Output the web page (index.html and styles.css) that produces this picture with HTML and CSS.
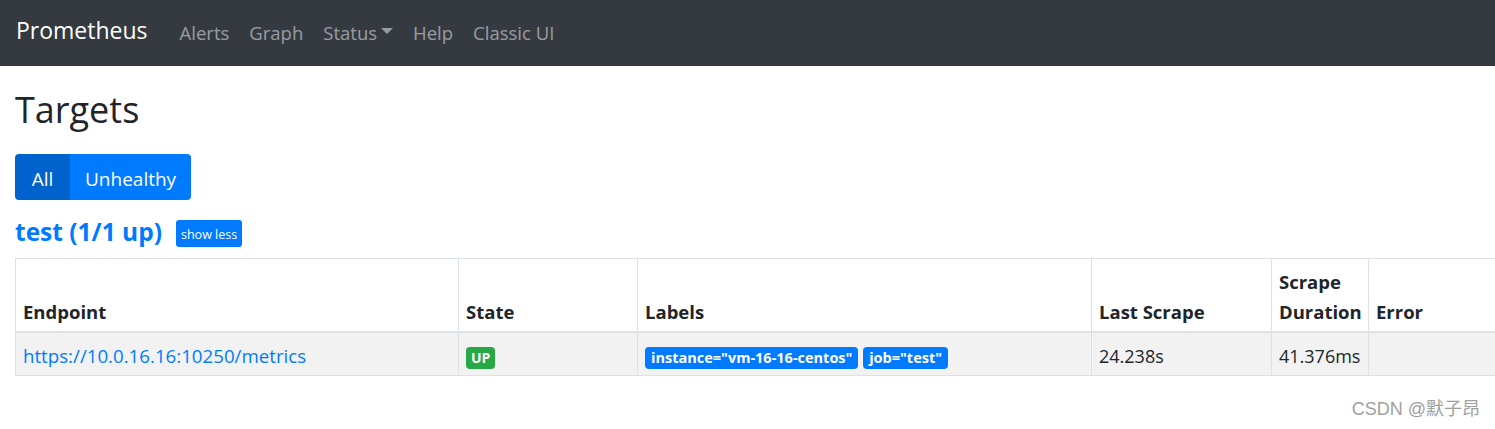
FILE: index.html
```html
<!DOCTYPE html>
<html>
<head>
<meta charset="utf-8">
<link rel="stylesheet" href="styles.css">
</head>
<body>
<nav class="navbar">
  <a class="brand">Prometheus</a>
  <ul class="nav">
    <li class="nav-link">Alerts</li>
    <li class="nav-link">Graph</li>
    <li class="nav-link">Status<span class="caret"></span></li>
    <li class="nav-link">Help</li>
    <li class="nav-link">Classic UI</li>
  </ul>
</nav>
<main class="container">
  <h2 class="title">Targets</h2>
  <div class="btn-group">
    <button class="btn btn-active">All</button>
    <button class="btn">Unhealthy</button>
  </div>
  <div class="pool-head">
    <a class="pool-name">test (1/1 up)</a>
    <button class="btn-sm">show less</button>
  </div>
  <table class="targets">
    <colgroup>
      <col class="c-endpoint"><col class="c-state"><col class="c-labels"><col class="c-last"><col class="c-dur"><col class="c-err">
    </colgroup>
    <thead>
      <tr>
        <th>Endpoint</th>
        <th>State</th>
        <th>Labels</th>
        <th>Last Scrape</th>
        <th>Scrape Duration</th>
        <th>Error</th>
      </tr>
    </thead>
    <tbody>
      <tr>
        <td><a class="link">https://10.0.16.16:10250/metrics</a></td>
        <td><span class="badge badge-up">UP</span></td>
        <td><span class="badge badge-label">instance="vm-16-16-centos"</span> <span class="badge badge-label">job="test"</span></td>
        <td>24.238s</td>
        <td>41.376ms</td>
        <td></td>
      </tr>
    </tbody>
  </table>
</main>
<div class="watermark">CSDN @默子昂</div>
</body>
</html>
```
FILE: styles.css
```css
html, body {
  margin: 0;
  padding: 0;
  overflow: hidden;
  background: #fff;
}
body {
  font-family: "Open Sans", "Noto Sans", sans-serif;
  font-size: 18px;
  line-height: 30px;
  color: #212529;
  width: 1495px;
  height: 429px;
  position: relative;
}
.navbar {
  height: 66px;
  background: #343a40;
  display: flex;
  align-items: center;
  padding: 0 16px;
  box-sizing: border-box;
}
.brand {
  color: #fff;
  font-size: 23px;
  margin-right: 22px;
  margin-top: -6px;
}
.nav {
  list-style: none;
  margin: 0;
  padding: 0;
  display: flex;
}
.nav-link {
  color: rgba(255,255,255,.5);
  font-size: 18.5px;
  padding: 0 10px;
  display: flex;
  align-items: center;
}
.caret {
  display: inline-block;
  width: 0;
  height: 0;
  margin-left: 4px;
  border-top: 6px solid rgba(255,255,255,.5);
  border-left: 6px solid transparent;
  border-right: 6px solid transparent;
  margin-top: -4px;
}
.container {
  padding: 0 15px;
}
.title {
  margin: 22px 0 0 0;
  font-size: 36px;
  line-height: 44px;
  font-weight: 400;
  height: 66px;
}
.btn-group {
  display: flex;
  height: 46px;
}
.btn {
  border: 0;
  margin: 0;
  font-family: inherit;
  font-size: 19px;
  color: #fff;
  background: #007bff;
  padding: 3px 15px 0;
  height: 46px;
}
.btn:first-child { border-radius: 4px 0 0 4px; }
.btn:last-child { border-radius: 0 4px 4px 0; }
.btn-active { background: #0062cc; width: 55px; padding: 3px 0 0; }
.pool-head {
  display: flex;
  align-items: center;
  margin-top: 20px;
  height: 27px;
}
.pool-name {
  color: #007bff;
  font-weight: 700;
  font-size: 24.5px;
  margin-right: 14px;
  margin-top: -3px;
}
.btn-sm {
  border: 0;
  font-family: inherit;
  background: #007bff;
  color: #fff;
  font-size: 12.5px;
  height: 27px;
  padding: 1px 5px 0;
  border-radius: 3px;
}
.targets {
  margin-top: 11px;
  border-collapse: collapse;
  table-layout: fixed;
  width: 1490px;
}
.c-endpoint { width: 443px; }
.c-state { width: 179px; }
.c-labels { width: 454px; }
.c-last { width: 180px; }
.c-dur { width: 97px; }
.targets th, .targets td {
  border: 1px solid #dee2e6;
  text-align: left;
}
.targets th {
  vertical-align: bottom;
  font-weight: 700;
  font-size: 18.5px;
  border-bottom: 2px solid #dee2e6;
  height: 60px;
  padding: 8px 7px 4px;
}
.targets td {
  background: #f2f2f2;
  vertical-align: middle;
  height: 30px;
  padding: 8px 7px 4px;
}
.link { color: #007bff; font-size: 18.7px; }
.badge {
  display: inline-block;
  color: #fff;
  font-weight: 700;
  font-size: 14.5px;
  line-height: 22px;
  height: 22px;
  padding: 0 6px;
  border-radius: 4px;
  vertical-align: middle;
}
.badge-up { background: #28a745; font-size: 14px; padding: 0 5px; }
.badge-label { background: #007bff; }
.watermark {
  position: absolute;
  right: 15px;
  bottom: 5px;
  font-family: "Liberation Sans", "Noto Sans CJK SC", sans-serif;
  font-size: 18px;
  color: #a0a0a0;
}
```
